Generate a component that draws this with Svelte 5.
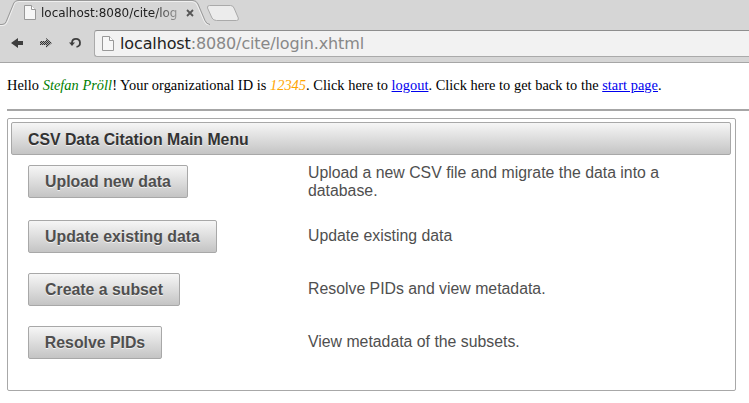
<script>
  const actions = [
    { label: 'Upload new data', width: 160, text: 'Upload a new CSV file and migrate the data into a database.' },
    { label: 'Update existing data', width: 189, text: 'Update existing data' },
    { label: 'Create a subset', width: 152, text: 'Resolve PIDs and view metadata.' },
    { label: 'Resolve PIDs', width: 134, text: 'View metadata of the subsets.' }
  ];
</script>

{#snippet page()}
  <svg class="page-icon" width="12" height="15" viewBox="0 0 12 15">
    <path d="M.5 .5H7.5L11.5 4.5V14.5H.5Z" fill="#f7f7f7" stroke="#999" />
    <path d="M7.5 .5V4.5H11.5" fill="#fff" stroke="#999" />
  </svg>
{/snippet}

<div class="window">
  <header>
    <div class="tabs">
      <svg class="strip" width="749" height="26" viewBox="0 0 749 26">
        <path d="M0 25.500H3Q6 25.500 7.200 22.500L14.500 4Q15.800 1.500 18.500 1.500H192Q195.500 1.500 197 5L204 21Q205.500 25 209 25" fill="none" stroke="#f0f0f0" />
        <path d="M0 24.500H2Q5 24.500 6.200 21.500L13.800 3Q15 .5 18 .5H193Q196.500 .5 198 4L205 20.500Q206.500 24.300 210 24.500" fill="none" stroke="#999" />
        <path d="M209.500 5.500H230.500Q233 5.500 234 8L238.300 18Q239 20.500 236.500 20.500H216.500Q213.500 20.500 212 18L207.500 8Q207 5.500 209.500 5.500Z" fill="#ececec" stroke="#aaa" />
      </svg>
      <div class="tab">
        {@render page()}
        <span class="title">localhost:8080/cite/log</span>
        <svg width="8" height="8" viewBox="0 0 8 8"><path d="M1 1L7 7M7 1L1 7" stroke="#555" stroke-width="1.8" /></svg>
      </div>
    </div>
    <div class="toolbar">
      <div class="nav">
        <svg width="14" height="14" viewBox="0 0 14 14"><path d="M0 7L7 2V5H12V9H7V12Z" fill="#3e3e3e" /></svg>
        <svg width="14" height="14" viewBox="0 0 14 14">
          <defs><pattern id="dither" width="2" height="2" patternUnits="userSpaceOnUse"><rect width="2" height="2" fill="#aaa" /><path d="M0 0H1V1H0ZM1 1H2V2H1Z" fill="#333" /></pattern></defs>
          <path d="M12 7L6 2V5H0V9H6V12Z" fill="url(#dither)" />
        </svg>
        <svg width="14" height="14" viewBox="0 0 14 14"><path d="M3 8V6.500A4 4 0 1 1 7.500 10.800" fill="none" stroke="#3e3e3e" stroke-width="1.8" /><path d="M0 6.500H6L3 10Z" fill="#3e3e3e" /></svg>
      </div>
      <div class="address">
        {@render page()}
        <span class="url"><b>localhost</b>:8080/cite/login.xhtml</span>
      </div>
    </div>
  </header>

  <main>
    <p class="hello">Hello <em class="name">Stefan Pröll</em>! Your organizational ID is <em class="id">12345</em>. Click here to <a href="#logout">logout</a>. Click here to get back to the <a href="#start">start page</a>.</p>
    <div class="rule"></div>
    <section class="panel">
      <h1>CSV Data Citation Main Menu</h1>
      <div class="rows">
        {#each actions as action}
          <div class="row">
            <div class="cell"><button style="width: {action.width}px">{action.label}</button></div>
            <div class="text">{action.text}</div>
          </div>
        {/each}
      </div>
    </section>
  </main>
</div>

<style>
  :global(body) { margin: 0; background: #fff; overflow: hidden; }
  .window { width: 749px; height: 403px; overflow: hidden; }
  header { box-sizing: border-box; height: 63px; background: #d6d6d6; border-bottom: 1px solid #a6a6a6; font-family: "DejaVu Sans", sans-serif; }
  .tabs { position: relative; height: 25px; }
  .strip { position: absolute; left: 0; top: 0; }
  .tab { position: relative; display: flex; align-items: center; height: 25px; padding-left: 24px; }
  .title { width: 137px; margin: 0 8px 0 5px; font-size: 12px; letter-spacing: -.02px; color: #222; white-space: nowrap; overflow: hidden; -webkit-mask-image: linear-gradient(90deg, #000 112px, transparent 148px); mask-image: linear-gradient(90deg, #000 112px, transparent 148px); }
  .toolbar { display: flex; padding-top: 5px; }
  .nav { display: flex; gap: 15px; width: 83px; padding: 6px 0 0 11px; }
  .address { box-sizing: border-box; display: flex; align-items: center; width: 655px; height: 27px; border: 1px solid #aaa; border-top-color: #8e8e8e; border-right: 0; border-radius: 3px 0 0 3px; background: #f2f2f2; padding-left: 7px; }
  .url { margin-left: 6px; font-size: 16px; letter-spacing: -.13px; color: #888; white-space: nowrap; }
  .url b { font-weight: 400; color: #222; }
  main { padding-left: 7px; }
  .hello { margin: 0; padding-top: 14px; height: 32px; font: 14.4px/17px "Liberation Serif", serif; letter-spacing: .022px; color: #000; white-space: nowrap; }
  .name { color: green; }
  .id { color: orange; }
  a { color: #00e; }
  .rule { height: 2px; background: #a6a6a6; }
  .panel { box-sizing: border-box; width: 729px; height: 273px; margin-top: 7px; padding: 3px; border: 1px solid #a8a8a8; border-radius: 2px; font-family: "Liberation Sans", sans-serif; color: #4f4f4f; }
  h1 { box-sizing: border-box; width: 720px; height: 33px; margin: 0; padding-left: 16px; border: 1px solid #a8a8a8; border-radius: 2px; background: linear-gradient(#f6f6f6, #c4c4c4); font-size: 15.84px; line-height: 33px; color: #333; text-shadow: 0 1px 0 rgba(255, 255, 255, .7); }
  .rows { padding: 10px 0 0 17px; }
  .row { display: flex; height: 53px; }
  .row:first-child { height: 55px; }
  .cell { width: 280px; }
  button { box-sizing: border-box; height: 33px; padding: 0; border: 1px solid #a8a8a8; border-radius: 2px; background: linear-gradient(#f6f6f6, #c4c4c4); font: bold 15.84px/31px "Liberation Sans", sans-serif; color: #4f4f4f; text-shadow: 0 1px 0 rgba(255, 255, 255, .7); }
  .text { width: 390px; padding-top: 7px; font-size: 15.84px; line-height: 18px; }
  .row:first-child .text { padding-top: 0; margin-top: -1px; }
</style>
